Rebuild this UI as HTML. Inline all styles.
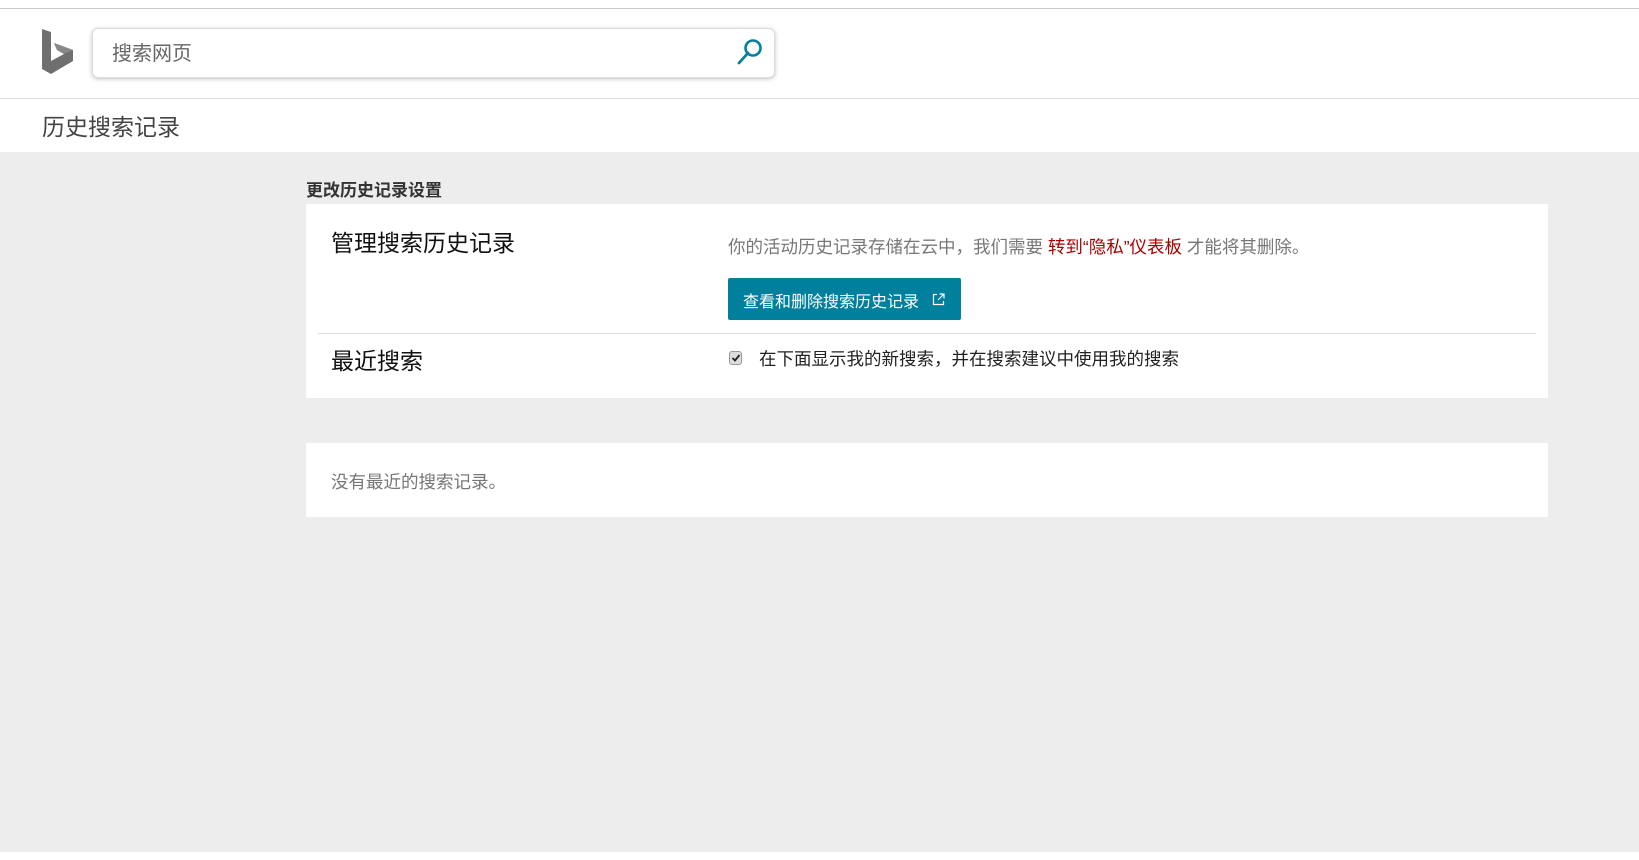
<!DOCTYPE html>
<html><head><meta charset="utf-8"><style>
*{margin:0;padding:0;box-sizing:border-box}
body{width:1639px;height:860px;background:#fff;font-family:"Liberation Sans","Microsoft YaHei","Noto Sans CJK SC",sans-serif;position:relative;overflow:hidden}
.a{position:absolute;white-space:nowrap}
</style></head><body>
<div class="a" style="left:0;top:8px;width:1639px;height:1px;background:#c8c8c8"></div>
<svg class="a" style="left:42px;top:29px" width="32" height="46" viewBox="0 0 32 46"><path d="M0 0 L9 3 V32 L22 25 L15 21 L12 14 L31 21 V32 L9 45 L0 40 Z" fill="#6f6f6f"/><path d="M12 14 L31 21 L22 25 L15 21 Z" fill="#888"/></svg>
<div class="a" style="left:92px;top:28px;width:683px;height:50px;border:1px solid #ddd;border-radius:6px;box-shadow:0 1px 4px rgba(0,0,0,.25);background:#fff"></div>
<div class="a" style="left:112px;top:37px;font-size:20px;color:#666">搜索网页</div>
<svg class="a" style="left:736px;top:38px" width="28" height="28" viewBox="0 0 28 28"><circle cx="17" cy="10" r="7.5" fill="none" stroke="#00809d" stroke-width="2.6"/><path d="M12 15 L3 25" stroke="#00809d" stroke-width="2.8" stroke-linecap="round"/></svg>
<div class="a" style="left:0;top:98px;width:1639px;height:1px;background:#ddd"></div>
<div class="a" style="left:42px;top:108px;font-size:23px;color:#444">历史搜索记录</div>
<div class="a" style="left:0;top:152px;width:1639px;height:700px;background:#ededed"></div>
<div class="a" style="left:306px;top:176px;font-size:17px;font-weight:bold;color:#333">更改历史记录设置</div>
<div class="a" style="left:306px;top:204px;width:1242px;height:194px;background:#fff"></div>
<div class="a" style="left:331px;top:224px;font-size:23px;color:#111">管理搜索历史记录</div>
<div class="a" style="left:728px;top:234px;font-size:17.5px;color:#777">你的活动历史记录存储在云中，我们需要 <span style="color:#a80000">转到“隐私”仪表板</span> 才能将其删除。</div>
<div class="a" style="left:728px;top:278px;width:233px;height:42px;background:#00809d;border-radius:2px"></div>
<div class="a" style="left:743px;top:288px;font-size:16px;color:#fff">查看和删除搜索历史记录</div>
<svg class="a" style="left:932px;top:293px" width="13" height="13" viewBox="0 0 13 13"><path d="M5 1.5H1.5V11.5H11.5V8M7.5 1H12V5.5M12 1L6 7" fill="none" stroke="#fff" stroke-width="1.2"/></svg>
<div class="a" style="left:318px;top:333px;width:1218px;height:1px;background:#ddd"></div>
<div class="a" style="left:331px;top:342px;font-size:23px;color:#111">最近搜索</div>
<div class="a" style="left:729px;top:351px;width:13px;height:14px;border:1px solid #999;border-radius:3px;background:#ddd"></div>
<svg class="a" style="left:731px;top:353px" width="10" height="10" viewBox="0 0 10 10"><path d="M1.5 5 L4 7.5 L8.5 2" fill="none" stroke="#222" stroke-width="1.8"/></svg>
<div class="a" style="left:759px;top:346px;font-size:17.5px;color:#222">在下面显示我的新搜索，并在搜索建议中使用我的搜索</div>
<div class="a" style="left:306px;top:443px;width:1242px;height:74px;background:#fff"></div>
<div class="a" style="left:331px;top:469px;font-size:17.5px;color:#777">没有最近的搜索记录。</div>
</body></html>
